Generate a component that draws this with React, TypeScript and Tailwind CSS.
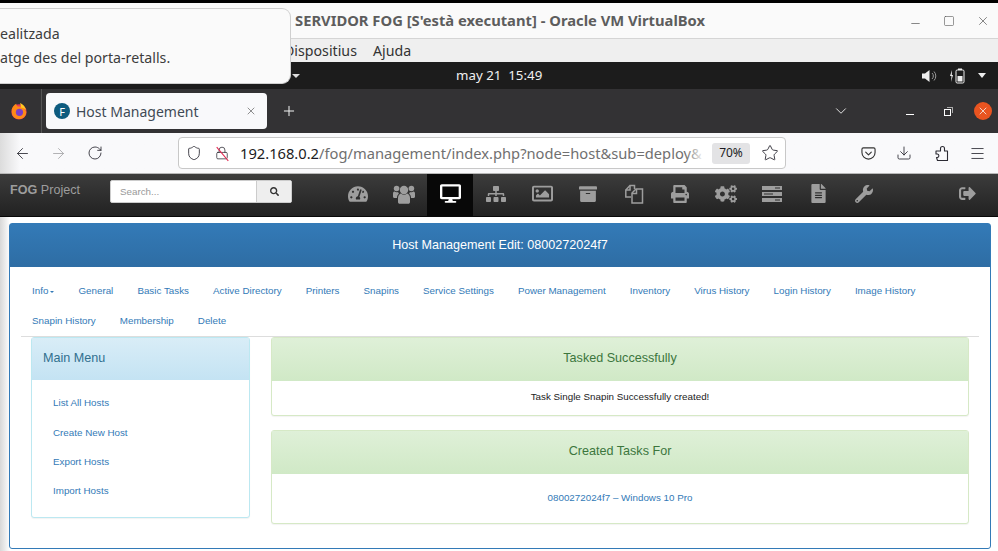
import {
  ArrowLeft,
  ArrowRight,
  Download,
  Lock,
  Menu,
  Plus,
  RotateCw,
  Shield,
  Star,
  X,
  ChevronDown,
  Minus,
  Square,
} from "lucide-react";
import {
  FaArchive,
  FaCogs,
  FaDesktop,
  FaFileAlt,
  FaPrint,
  FaRegImage,
  FaSearch,
  FaSignOutAlt,
  FaSitemap,
  FaTachometerAlt,
  FaWrench,
} from "react-icons/fa";

const tabsRowOne = [
  "General",
  "Basic Tasks",
  "Active Directory",
  "Printers",
  "Snapins",
  "Service Settings",
  "Power Management",
  "Inventory",
  "Virus History",
  "Login History",
  "Image History",
];
const tabsRowTwo = ["Snapin History", "Membership", "Delete"];
const menuLinks = ["List All Hosts", "Create New Host", "Export Hosts", "Import Hosts"];

function UsersIcon() {
  return (
    <svg width="22" height="20" viewBox="0 0 22 20" fill="currentColor">
      <circle cx="11" cy="6" r="4.2" />
      <circle cx="3.600" cy="4.500" r="2.800" />
      <circle cx="18.400" cy="4.500" r="2.800" />
      <path d="M5 14c0-3 2-4.500 3-4.500 1 .8 2 1.300 3 1.300s2-.5 3-1.300c1 0 3 1.500 3 4.500v4c0 1-.7 1.800-1.800 1.800H6.800C5.700 19.800 5 19 5 18z" />
      <path d="M0 9.500C0 8 1 7.500 1.500 7.500c.7.500 1.400.8 2.100.8.500 0 1-.1 1.500-.4.100.7.400 1.300.9 1.800C4.500 10.500 4 12 4 14H1.200C.5 14 0 13.500 0 12.800z" />
      <path d="M22 9.500C22 8 21 7.500 20.500 7.500c-.7.500-1.400.8-2.100.8-.5 0-1-.1-1.500-.4-.1.7-.4 1.300-.9 1.800 1.500.8 2 2.300 2 4.300h2.800c.7 0 1.200-.5 1.200-1.200z" />
    </svg>
  );
}

function FilesIcon() {
  return (
    <svg width="20" height="20" viewBox="0 0 20 20" fill="none" stroke="currentColor" strokeWidth="1.500">
      <path d="M7 13H1.800V6L6 1.500h4.500V5" />
      <path d="M6 1.500V6H1.800" />
      <path d="M8 19V9l4-4h6.500v14z" />
      <path d="M12.500 5v4.500H8" />
    </svg>
  );
}

function ServerIcon() {
  return (
    <svg width="20" height="16" viewBox="0 0 20 16" fill="currentColor">
      <path d="M0 0h20v4H0zM0 6h20v4H0zM0 12h20v4H0z" />
      <path d="M13 1.500h5v1h-5zM2 7.500h9v1H2zM13 13.500h5v1h-5z" fill="#2f2f2f" />
    </svg>
  );
}

const navIcons = [
  { icon: <FaTachometerAlt size={20} /> },
  { icon: <UsersIcon /> },
  { icon: <FaDesktop size={21} />, active: true },
  { icon: <FaSitemap size={20} /> },
  { icon: <FaRegImage size={21} /> },
  { icon: <FaArchive size={18} /> },
  { icon: <FilesIcon /> },
  { icon: <FaPrint size={18} /> },
  { icon: <FaCogs size={22} /> },
  { icon: <ServerIcon /> },
  { icon: <FaFileAlt size={19} /> },
  { icon: <FaWrench size={18} /> },
];

function FirefoxLogo() {
  return (
    <svg width="18" height="18" viewBox="0 0 20 20">
      <circle cx="10" cy="11" r="8.500" fill="#e8375f" />
      <path d="M2 8c1-3 3-5 5-6 0 2 1 3 2 3 4 0 8 2 9 6 0 4-3 8-8 8-5 0-8-4-8-8z" fill="#ff8a16" />
      <circle cx="10.500" cy="11.500" r="4" fill="#7b3fc8" />
      <path d="M11 1c3 1 6 4 7 8-2-2-4-3-6-3 0-2 0-3-1-5z" fill="#ffc91f" />
    </svg>
  );
}

function PocketIcon() {
  return (
    <svg width="15" height="15" viewBox="0 0 16 16" fill="none" stroke="#333" strokeWidth="1.200">
      <path d="M2.500 2h11A1.500 1.500 0 0 1 15 3.500V7a7 7 0 0 1-14 0V3.500A1.500 1.500 0 0 1 2.500 2z" />
      <path d="M5 6.500l3 3 3-3" strokeLinecap="round" strokeLinejoin="round" />
    </svg>
  );
}

function PuzzleIcon() {
  return (
    <svg width="16" height="17" viewBox="0 0 16 17" fill="none" stroke="#2b2a33" strokeWidth="1.100" strokeLinejoin="round">
      <path d="M3.500 15.500H13.500V6h-3V3.500a2 2 0 0 0-4 0V6H2v3h1.500a1.800 1.800 0 0 1 0 3.500H2.500z" />
    </svg>
  );
}

function Panel({
  title,
  children,
  className,
}: {
  title: string;
  children: React.ReactNode;
  className: string;
}) {
  return (
    <section
      className={`border border-[#d6e9c6] rounded-[3px] shadow-[0_1px_1px_rgba(0,0,0,0.05)] bg-white ${className}`}
    >
      <h3 className="h-[43px] pb-[2px] flex items-center justify-center text-[12.600px] text-[#3c763d] bg-gradient-to-b from-[#dff0d8] to-[#d0e9c6]">
        {title}
      </h3>
      {children}
    </section>
  );
}

export default function App() {
  return (
    <div className="relative w-[998px] h-[551px] overflow-hidden bg-white font-['Liberation_Sans',sans-serif]">
      {/* notification over the VirtualBox window */}
      <div className="absolute left-0 top-[8px] z-10 w-[291px] h-[76px] bg-[#fafafa] border border-l-0 border-[#cfcfcf] rounded-r-[9px] pt-[13px] font-['Noto_Sans',sans-serif] text-[14.200px] leading-[24px] text-[#3d3d3d]">
        <p>ealitzada</p>
        <p>atge des del porta-retalls.</p>
      </div>

      <div className="h-[3px] bg-black" />

      {/* VirtualBox title */}
      <div className="h-[36px] bg-[#fafafa] border-b border-[#d5d5d5] flex items-center pl-[295px] pr-[8px] font-['Noto_Sans',sans-serif]">
        <span className="text-[14.750px] font-bold text-[#5d5d5d] whitespace-nowrap">
          SERVIDOR FOG [S'està executant] - Oracle VM VirtualBox
        </span>
        <div className="ml-auto flex items-center gap-[21px] text-[#555]">
          <Minus size={13} strokeWidth={1.300} className="translate-y-[3px]" />
          <Square size={12} strokeWidth={1.200} />
          <X size={14} strokeWidth={1.200} />
        </div>
      </div>

      {/* VirtualBox menu */}
      <div className="h-[23px] bg-[#efefef] flex items-center pl-[284px] gap-[16px] font-['Noto_Sans',sans-serif] text-[14.200px] text-[#333]">
        <span>Dispositius</span>
        <span>Ajuda</span>
      </div>

      {/* guest desktop top bar */}
      <div className="h-[27px] bg-[#1c1c1c] flex items-center text-[#f0f0f0] font-['Noto_Sans',sans-serif] text-[13.300px]">
        <span className="ml-[292px] w-0 h-0 border-x-[4px] border-x-transparent border-t-[4px] border-t-[#ddd]" />
        <span className="ml-[156px] whitespace-nowrap">may 21&nbsp;&nbsp;15:49</span>
        <div className="ml-auto mr-[12px] flex items-center gap-[12px]">
          <svg width="15" height="14" viewBox="0 0 15 14" fill="#eee">
            <path d="M0 4.500h3L7.500 1v12L3 9.500H0z" />
            <path d="M10 4a4 4 0 0 1 0 6M12 2.500a6.500 6.500 0 0 1 0 9" fill="none" stroke="#999" />
          </svg>
          <svg width="17" height="16" viewBox="0 0 17 16" fill="none">
            <path d="M3 2L1 8h1.500L2 14l2-7H2.800z" fill="#eee" />
            <rect x="7" y="2" width="8" height="13" rx="1.200" stroke="#eee" />
            <rect x="9" y="0.500" width="4" height="1.500" fill="#eee" />
            <rect x="8.500" y="8" width="5" height="5.500" fill="#eee" />
          </svg>
          <span className="w-0 h-0 border-x-[4.500px] border-x-transparent border-t-[5px] border-t-[#eee]" />
        </div>
      </div>

      {/* Firefox tab strip */}
      <div className="h-[44px] bg-[#333234] flex items-center text-[#f4f4f4]">
        <div className="w-[42px] h-full border-r border-[#555] flex items-center justify-center pr-[4px]">
          <FirefoxLogo />
        </div>
        <div className="ml-[4px] w-[221px] h-[36px] bg-[#f9f9fb] rounded-[4px] flex items-center pl-[8px] pr-[10px] text-[#3f4a55] font-['Noto_Sans',sans-serif] text-[14px]">
          <span className="w-[16px] h-[16px] rounded-full bg-[#0e5b7e] flex items-center justify-center text-white text-[11px] leading-none">
            F
          </span>
          <span className="ml-[6px]">Host Management</span>
          <X size={12} strokeWidth={1.200} className="ml-auto text-[#444]" />
        </div>
        <Plus size={16} strokeWidth={1.500} className="ml-[14px]" />
        <ChevronDown size={18} strokeWidth={1.200} className="ml-[535px]" />
        <span className="ml-[56px] w-[8px] h-px bg-white translate-y-[3px]" />
        <span className="relative ml-[30px] w-[7px] h-[7px] border border-white translate-y-px">
          <span className="absolute -top-[3px] -right-[3px] w-[6px] h-[6px] border-t border-r border-[#aaa]" />
        </span>
        <span className="ml-[23px] w-[18px] h-[18px] rounded-full bg-[#e95420] flex items-center justify-center">
          <X size={12} strokeWidth={1.600} />
        </span>
      </div>

      {/* Firefox toolbar */}
      <div className="h-[41px] bg-gradient-to-r from-[#dcdcdc] via-[#f9f9fb] via-[2%] to-[#f9f9fb] border-b border-[#b8b8b8] flex items-center text-[#2b2a33]">
        <ArrowLeft size={17} strokeWidth={1.200} className="ml-[14px]" />
        <ArrowRight size={17} strokeWidth={1.200} className="ml-[19px] text-[#a5a5a8]" />
        <RotateCw size={16} strokeWidth={1.300} className="ml-[20px]" />
        <div className="ml-[75px] w-[608px] h-[32px] bg-white border border-[#c8c8c8] rounded-[4px] flex items-center pl-[7px] pr-[6px]">
          <Shield size={16} strokeWidth={1.300} />
          <span className="relative ml-[13px]">
            <Lock size={14} strokeWidth={1.300} />
            <span className="absolute left-[7px] -top-[1px] h-[18px] w-px bg-[#e22850] -rotate-[40deg]" />
          </span>
          <div className="relative ml-[11px] w-[464px] overflow-hidden whitespace-nowrap font-['Noto_Sans',sans-serif] text-[14.700px] text-[#707070]">
            <span className="text-[#1c1b22]">192.168.0.2</span>
            /fog/management/index.php?node=host&amp;sub=deploy&amp;
            <span className="absolute right-0 top-0 h-full w-[18px] bg-gradient-to-r from-transparent to-white" />
          </div>
          <span className="ml-[8px] w-[38px] h-[21px] rounded-[3px] bg-[#e3e3e5] flex items-center justify-center font-['Noto_Sans',sans-serif] text-[12px] text-[#1c1b22]">
            70%
          </span>
          <Star size={18} strokeWidth={1.200} className="ml-[11px]" />
        </div>
        <span className="ml-[75px]">
          <PocketIcon />
        </span>
        <Download size={16} strokeWidth={1.300} className="ml-[20px]" />
        <span className="ml-[22px]">
          <PuzzleIcon />
        </span>
        <Menu size={17} strokeWidth={1.200} className="ml-[19px]" />
      </div>

      {/* FOG nav */}
      <nav className="h-[43px] bg-gradient-to-b from-[#3c3c3c] to-[#222] border-b border-[#080808] flex">
        <span className="ml-[10px] mt-[9px] text-[12.600px] leading-[14px] text-[#9d9d9d] w-[100px]">
          <b>FOG</b> Project
        </span>
        <div className="mt-[6px] w-[182px] h-[23px] flex rounded-[2px] border border-[#ccc] bg-white overflow-hidden">
          <span className="flex-1 pl-[9px] text-[9.800px] leading-[21px] text-[#999]">Search...</span>
          <span className="w-[35px] bg-[#eee] border-l border-[#ccc] flex items-center justify-center text-[#333]">
            <FaSearch size={9} />
          </span>
        </div>
        <div className="ml-[43px] flex">
          {navIcons.map(({ icon, active }, i) => (
            <span
              key={i}
              className={`w-[46px] h-[42px] pb-[3px] flex items-center justify-center ${
                active ? "bg-[#080808] text-white" : "text-[#9d9d9d]"
              }`}
            >
              {icon}
            </span>
          ))}
        </div>
        <span className="ml-[72px] h-[42px] pb-[3px] flex items-center text-[#9d9d9d]">
          <FaSignOutAlt size={17} />
        </span>
      </nav>

      {/* page body */}
      <main className="h-[334px] bg-gradient-to-r from-[#d8d8d8] via-white via-[1%] to-white pt-[6px] pl-[9px] pr-[7px]">
        <div className="h-[326px] border border-[#337ab7] rounded-[3px] bg-white">
          <header className="h-[43px] flex items-center justify-center text-[12.600px] text-white bg-gradient-to-b from-[#337ab7] to-[#2e6da4]">
            Host Management Edit: 0800272024f7
          </header>

          <div className="mx-[11px] h-[70px] border-b border-[#ddd] pt-[10px] pl-[11px] text-[9.800px] text-[#337ab7]">
            <ul className="h-[29.500px] flex items-center gap-[24.100px] whitespace-nowrap">
              <li className="flex items-center">
                Info
                <span className="ml-[2px] w-0 h-0 border-x-[2px] border-x-transparent border-t-[2px] border-t-[#337ab7]" />
              </li>
              {tabsRowOne.map((t) => (
                <li key={t}>{t}</li>
              ))}
            </ul>
            <ul className="h-[29.500px] flex items-center gap-[24.100px] whitespace-nowrap">
              {tabsRowTwo.map((t) => (
                <li key={t}>{t}</li>
              ))}
            </ul>
          </div>

          <div className="flex pl-[21px] pr-[21px] gap-[21px]">
            <aside className="w-[219px] h-[181px] shrink-0 border border-[#bce8f1] rounded-[3px] bg-white shadow-[0_1px_1px_rgba(0,0,0,0.05)]">
              <h3 className="h-[42px] pb-[2px] flex items-center pl-[11px] text-[12.600px] text-[#31708f] bg-gradient-to-b from-[#d9edf7] to-[#c4e3f3]">
                Main Menu
              </h3>
              <ul className="pt-[9px] pl-[21px] text-[9.800px] text-[#337ab7]">
                {menuLinks.map((l) => (
                  <li key={l} className="h-[29.300px] flex items-center">
                    {l}
                  </li>
                ))}
              </ul>
            </aside>

            <div className="flex-1 flex flex-col gap-[14px]">
              <Panel title="Tasked Successfully" className="h-[79px]">
                <p className="h-[33px] flex items-center justify-center text-[9.800px] text-[#222]">
                  Task Single Snapin Successfully created!
                </p>
              </Panel>
              <Panel title="Created Tasks For" className="h-[94px]">
                <p className="h-[49px] flex items-center justify-center text-[9.800px] text-[#337ab7]">
                  0800272024f7 – Windows 10 Pro
                </p>
              </Panel>
            </div>
          </div>
        </div>
      </main>
    </div>
  );
}
